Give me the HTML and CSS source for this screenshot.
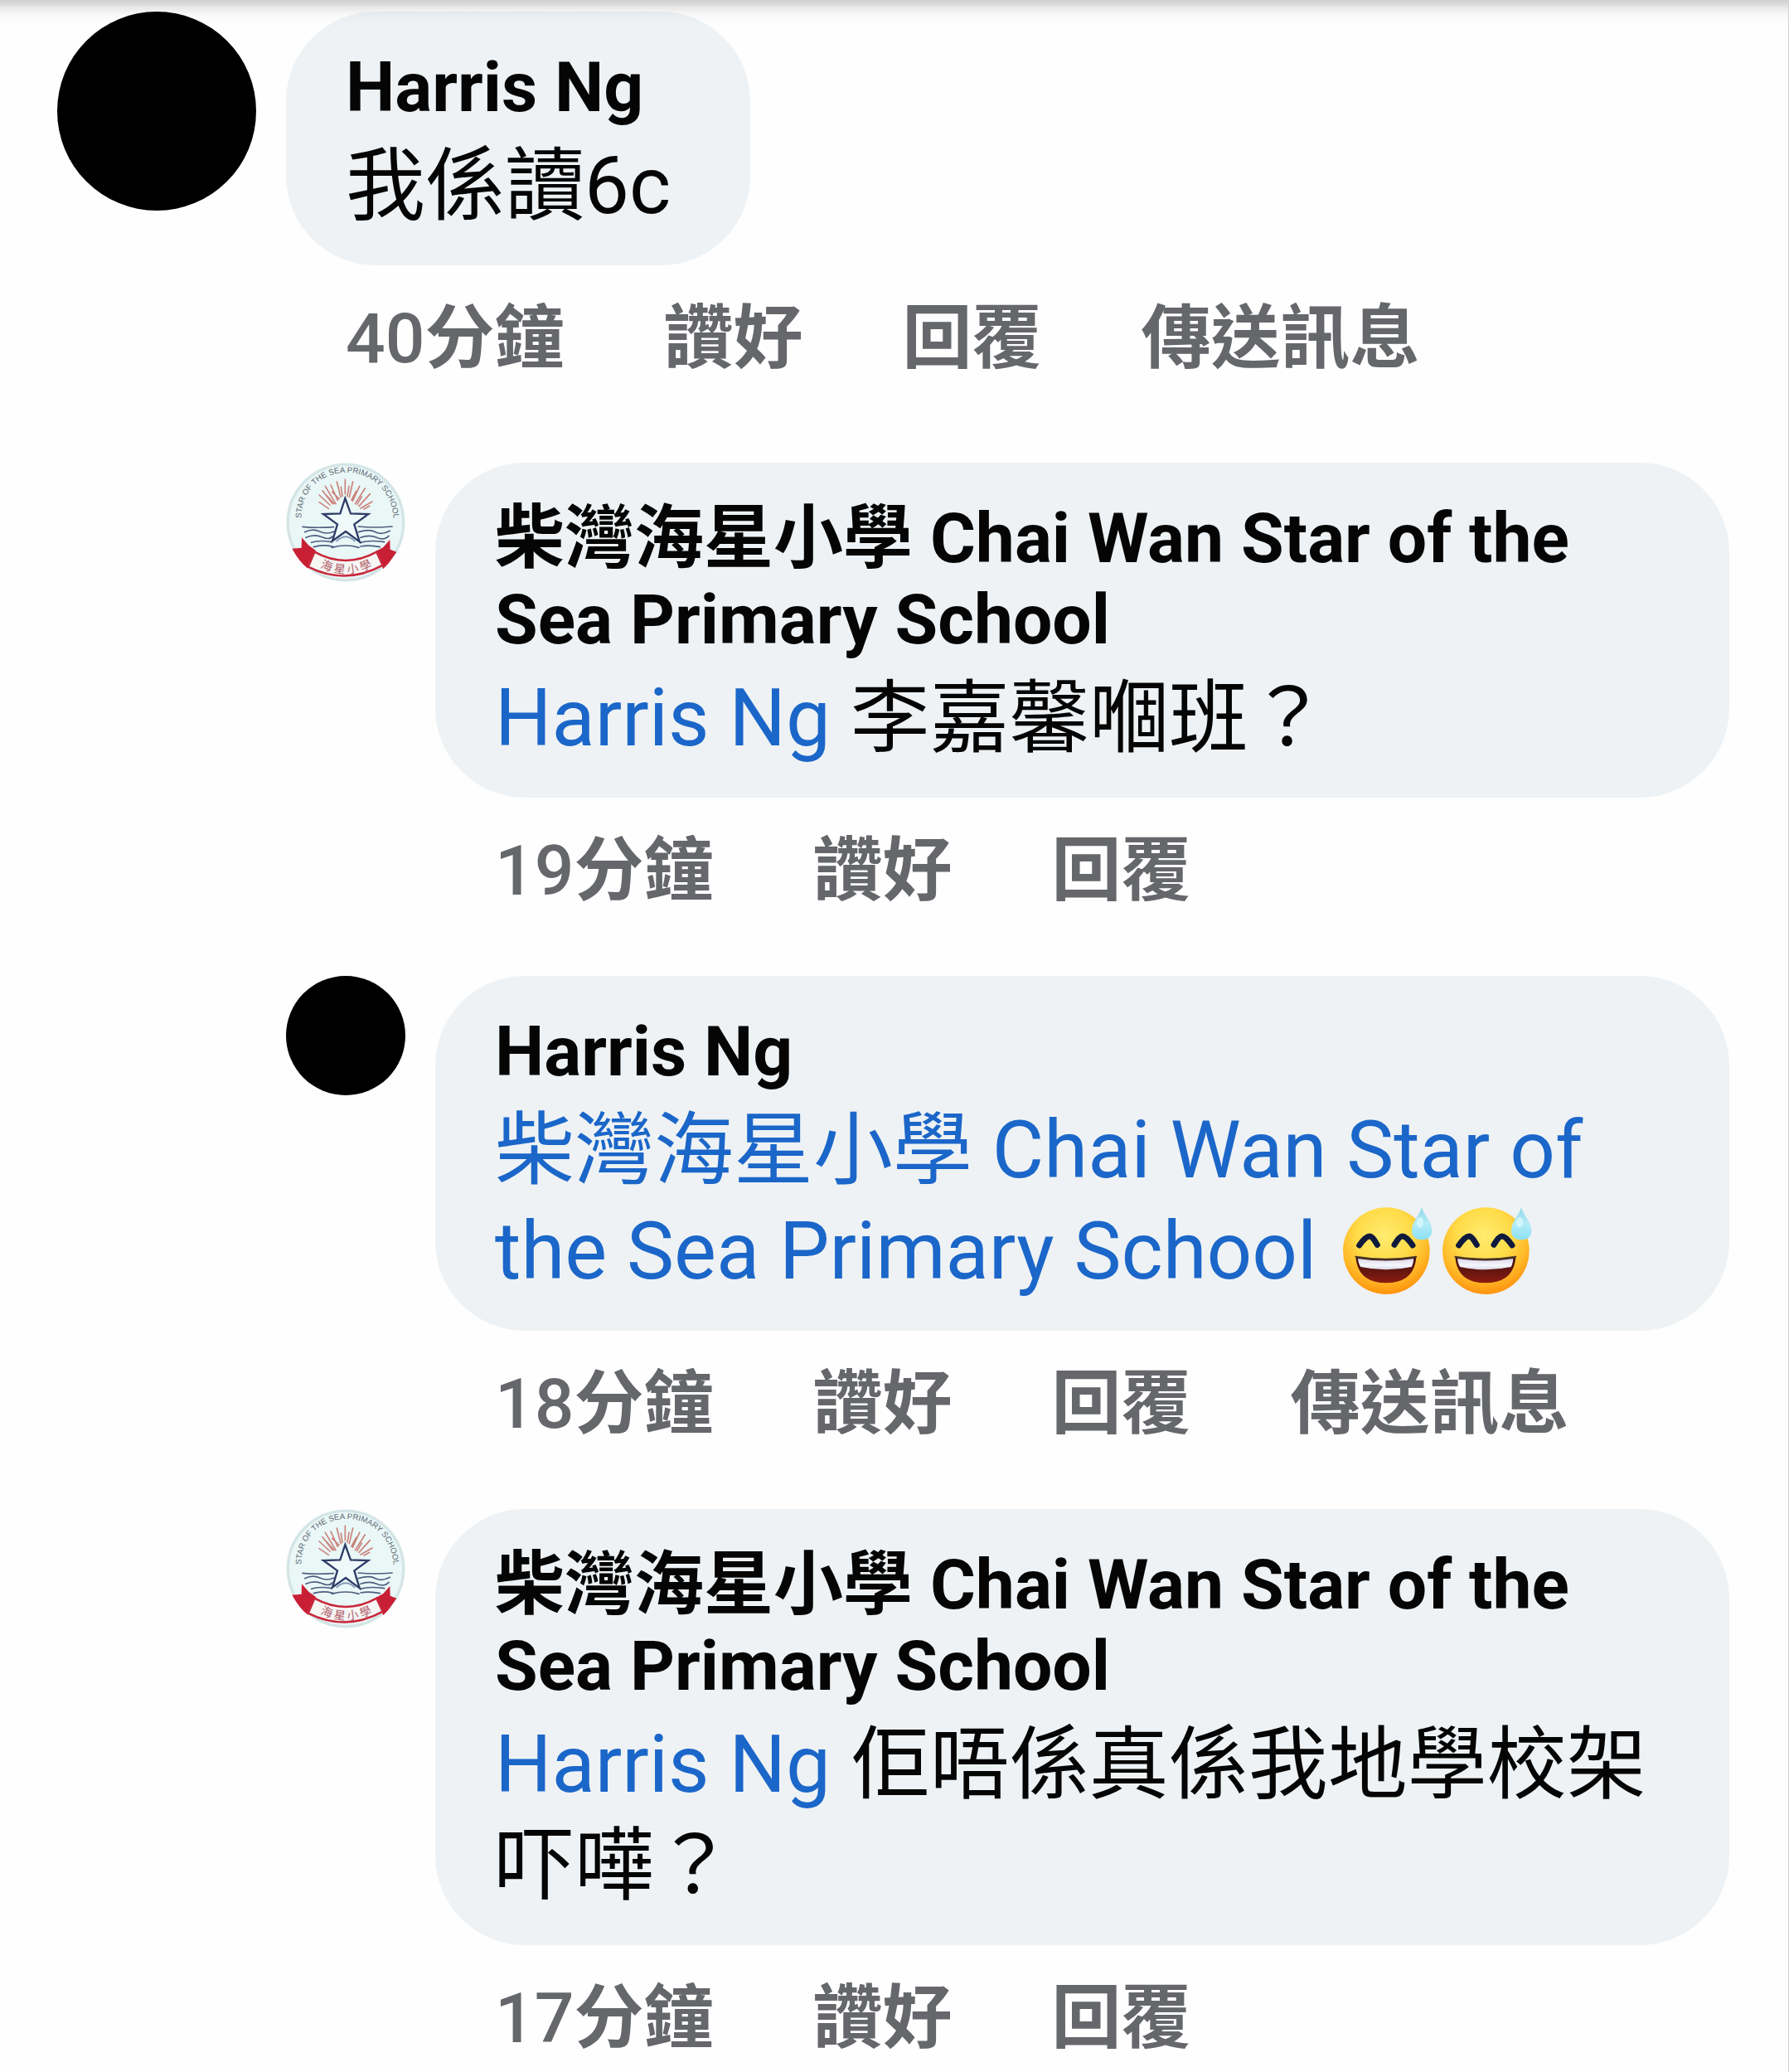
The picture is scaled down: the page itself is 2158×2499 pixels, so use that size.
FILE: index.html
```html
<!DOCTYPE html>
<html lang="zh-HK">
<head>
<meta charset="utf-8">
<meta name="viewport" content="width=device-width, initial-scale=1">
<title>留言</title>
<link rel="stylesheet" href="styles.css">
</head>
<body>
<svg class="sprite" aria-hidden="true">
  <defs>
    <radialGradient id="face" cx="200" cy="150" r="225" gradientUnits="userSpaceOnUse">
      <stop offset="0" stop-color="#ffec70"/>
      <stop offset=".45" stop-color="#ffdb48"/>
      <stop offset=".72" stop-color="#ffb928"/>
      <stop offset="1" stop-color="#ff8a08"/>
    </radialGradient>
    <linearGradient id="drop" x1="0" y1="0" x2="0" y2="1">
      <stop offset="0" stop-color="#93d6e8"/>
      <stop offset=".5" stop-color="#b5ecf7"/>
      <stop offset="1" stop-color="#8be0f6"/>
    </linearGradient>
    <linearGradient id="teeth" x1="0" y1="0" x2="0" y2="1">
      <stop offset="0" stop-color="#d9d9ea"/>
      <stop offset=".6" stop-color="#f6f6fd"/>
      <stop offset="1" stop-color="#d5d5e6"/>
    </linearGradient>
    <linearGradient id="mouth" x1="0" y1="0" x2="0" y2="1">
      <stop offset="0" stop-color="#3a1010"/>
      <stop offset="1" stop-color="#8a1c10"/>
    </linearGradient>
    <path id="motto" d="M103 240 C108 20 420 20 437 240"/>
    <path id="ribbon-text" d="M156 408 Q264 472 376 408"/>
  </defs>
  <symbol id="sweat-smile" viewBox="27 45 360 336">
    <circle cx="208" cy="206" r="157" fill="url(#face)"/>
    <path d="M110 186 Q133 153 148 153 Q158 153 175 184" fill="none" stroke="#101a3c" stroke-width="21" stroke-linecap="round" stroke-linejoin="round"/>
    <path d="M237 184 Q255 153 266 153 Q280 153 303 186" fill="none" stroke="#101a3c" stroke-width="21" stroke-linecap="round" stroke-linejoin="round"/>
    <path d="M97 227 Q207 245 316 227 Q310 322 207 322 Q104 322 97 227Z" fill="url(#mouth)"/>
    <path d="M105 234 Q207 249 307 234 Q306 252 299 264 Q207 284 115 264 Q106 252 105 234Z" fill="url(#teeth)"/>
    <path d="M97 227 Q207 245 316 227" fill="none" stroke="#4a3a28" stroke-width="6" stroke-linecap="round"/>
    <path d="M336 48 C342 74 373 100 373 134 C373 155 356 166 337 166 C317 166 300 155 300 134 C300 100 330 74 336 48Z" fill="url(#drop)"/>
    <ellipse cx="330" cy="103" rx="12" ry="19" fill="#d8fafe" opacity=".8"/>
  </symbol>
  <symbol id="school-badge" viewBox="48 39 432 432">
    <circle cx="264" cy="255" r="215" fill="#eaf7f7"/>
    <circle cx="264" cy="255" r="209" fill="none" stroke="#d5e5e6" stroke-width="10"/>
    <g fill="none" stroke="#c9837b" stroke-width="5" stroke-linecap="round">
      <path d="M202 205 L168 182M207 192 L168 156M216 187 L180 140M222 188 L195 158M228 188 L190 124M235 175 L210 120M240 170 L215 145M246 164 L232 108M252 160 L247 126M262 152 L262 100M270 160 L276 124M277 164 L290 108M285 174 L302 142M289 178 L314 124M298 188 L334 132M305 190 L322 162M312 196 L352 152M318 204 L360 180M330 207 L350 196"/>
    </g>
    <g fill="none" stroke="#4d5e80" stroke-width="5" stroke-linecap="round">
      <path d="M108 271 Q150 276 220 272M310 270 Q370 276 432 270M116 290 Q145 276 170 288 T222 288M310 290 Q350 278 372 290 T424 286M120 310 Q150 296 178 308 T215 306M318 310 Q350 298 376 310 T420 304M140 328 Q165 318 215 326M316 328 Q350 318 404 326M148 344 Q180 334 218 343M214 346 Q264 332 312 346M318 342 Q350 336 388 344"/>
    </g>
    <path d="M262 168 L282 223 L346 225 L295 262 L314 325 L264 288 L216 322 L234 262 L183 225 L244 223Z" fill="#eff9fa" stroke="#2d3c66" stroke-width="7"/>
    <path d="M230 324 Q264 290 298 324" fill="none" stroke="#7890ae" stroke-width="5"/>
    <path d="M68 350 L104 347 L105 310 L130 338 L157 358 L127 422 L108 412Z" fill="#c91f35"/>
    <path d="M448 362 L425 353 L424 318 L400 345 L373 360 L400 424 L420 402Z" fill="#c91f35"/>
    <path d="M151 362 Q264 424 376 362 L398 410 Q264 484 128 416Z" fill="#f6f6f4" stroke="#c9283c" stroke-width="8"/>
  </symbol>
</svg>

<main class="thread">
  <article class="comment">
    <span class="avatar avatar-large"></span>
    <div class="content">
      <div class="bubble">
        <a class="author" href="#harris">Harris Ng</a>
        <p class="message">我係讀6c</p>
      </div>
      <div class="actions">
        <a href="#c1"><span class="count">40</span>分鐘</a>
        <button type="button">讚好</button>
        <button type="button">回覆</button>
        <button type="button">傳送訊息</button>
      </div>
    </div>
  </article>

  <section class="replies">
    <article class="comment">
      <svg class="avatar school" viewBox="48 39 432 432" role="img" aria-label="柴灣海星小學">
        <use href="#school-badge" x="48" y="39" width="432" height="432"/>
        <text class="motto"><textPath href="#motto">STAR OF THE SEA PRIMARY SCHOOL</textPath></text>
        <text class="ribbon"><textPath href="#ribbon-text" startOffset="50%" text-anchor="middle">海 星 小 學</textPath></text>
      </svg>
      <div class="content">
        <div class="bubble">
          <a class="author" href="#school">柴灣海星小學 Chai Wan Star of the Sea Primary School</a>
          <p class="message"><a class="mention" href="#harris">Harris Ng</a> 李嘉馨嗰班？</p>
        </div>
        <div class="actions">
          <a href="#c2"><span class="count">19</span>分鐘</a>
          <button type="button">讚好</button>
          <button type="button">回覆</button>
        </div>
      </div>
    </article>

    <article class="comment">
      <span class="avatar"></span>
      <div class="content">
        <div class="bubble">
          <a class="author" href="#harris">Harris Ng</a>
          <p class="message"><a class="mention" href="#school">柴灣海星小學 Chai Wan Star of the Sea Primary School</a> <svg class="emoji" role="img" aria-label="😅"><use href="#sweat-smile"/></svg><svg class="emoji" role="img" aria-label="😅"><use href="#sweat-smile"/></svg></p>
        </div>
        <div class="actions">
          <a href="#c3"><span class="count">18</span>分鐘</a>
          <button type="button">讚好</button>
          <button type="button">回覆</button>
          <button type="button">傳送訊息</button>
        </div>
      </div>
    </article>

    <article class="comment">
      <svg class="avatar school" viewBox="48 39 432 432" role="img" aria-label="柴灣海星小學">
        <use href="#school-badge" x="48" y="39" width="432" height="432"/>
        <text class="motto"><textPath href="#motto">STAR OF THE SEA PRIMARY SCHOOL</textPath></text>
        <text class="ribbon"><textPath href="#ribbon-text" startOffset="50%" text-anchor="middle">海 星 小 學</textPath></text>
      </svg>
      <div class="content">
        <div class="bubble">
          <a class="author" href="#school">柴灣海星小學 Chai Wan Star of the Sea Primary School</a>
          <p class="message"><a class="mention" href="#harris">Harris Ng</a> 佢唔係真係我地學校架吓嘩？</p>
        </div>
        <div class="actions">
          <a href="#c4"><span class="count">17</span>分鐘</a>
          <button type="button">讚好</button>
          <button type="button">回覆</button>
        </div>
      </div>
    </article>
  </section>
</main>
</body>
</html>
```
FILE: styles.css
```css
* {
  box-sizing: border-box;
}

body {
  margin: 0;
  background: #fefefe;
  color: #050505;
  font-family: Roboto, "Noto Sans CJK TC", sans-serif;
}

a {
  color: inherit;
  text-decoration: none;
}

.sprite {
  position: absolute;
  width: 0;
  height: 0;
}

.thread {
  position: relative;
  min-height: 100vh;
  padding: 14px 71px 16px 69px;
  border-right: 1px solid #d0d1d4;
}

/* shadow cast by the bar above the thread */
.thread::before {
  content: "";
  position: absolute;
  inset: 0 0 auto;
  height: 30px;
  background: linear-gradient(rgba(0, 0, 0, .18), rgba(0, 0, 0, .15) 4px, rgba(0, 0, 0, .08) 10px, rgba(0, 0, 0, .02) 18px, transparent);
  pointer-events: none;
}

.comment {
  display: flex;
  align-items: flex-start;
  gap: 36px;
}

.replies {
  display: flex;
  flex-direction: column;
  gap: 77px;
  margin-top: 100px;
  padding-left: 276px;
}

.avatar {
  flex: none;
  width: 144px;
  height: 144px;
  border-radius: 50%;
  background: #000;
}

.avatar-large {
  width: 240px;
  height: 240px;
}

.school {
  background: none;
}

.motto {
  fill: #5a6872;
  font: 400 29px "Liberation Sans", sans-serif;
}

.ribbon {
  fill: #b0606a;
  font: 400 42px "Noto Sans CJK TC", sans-serif;
}

.content {
  flex: 1;
  min-width: 0;
}

.bubble {
  width: fit-content;
  padding: 43px 96px 35px 72px;
  border-radius: 108px;
  background: #eef2f4;
}

.author {
  display: block;
  font-size: 84px;
  font-weight: 700;
  line-height: 98px;
}

.message {
  margin: 8px 0 0;
  font-size: 96px;
  line-height: 122px;
}

.mention {
  color: #1b66c9;
}

.emoji {
  width: 120px;
  height: 112px;
  vertical-align: -25px;
}

.actions {
  display: flex;
  flex-wrap: wrap;
  gap: 0 120px;
  margin-top: 40px;
  padding-left: 72px;
  color: #65676b;
  font-size: 84px;
  font-weight: 700;
  line-height: 98px;
}

.count {
  font-weight: 500;
}

.actions button {
  padding: 0;
  border: 0;
  background: none;
  color: inherit;
  font: inherit;
  cursor: pointer;
}
```
